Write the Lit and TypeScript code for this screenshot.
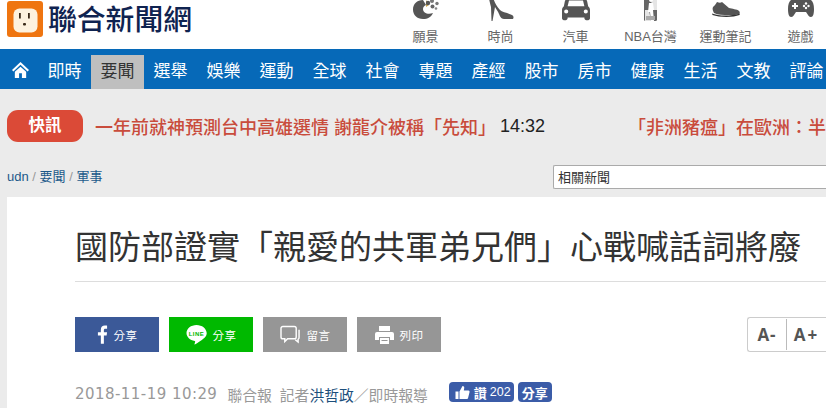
import { LitElement, html, css, svg } from "lit";
import { customElement } from "lit/decorators.js";

const NAV = ["即時", "要聞", "選舉", "娛樂", "運動", "全球", "社會", "專題", "產經", "股市", "房市", "健康", "生活", "文教", "評論"];

const ICONS: [string, any][] = [
  ["願景", svg`<svg width="28" height="24" viewBox="0 0 28 24"><path d="M11 3C5 3 1 7 1 12.500S5 22 11 22c5 0 8-2 10-6-5 2-10 0-10-4 0-2 1-3 3-4L11 3z" fill="#555"/><path d="M14 3l3 5-3 2z" fill="#c9a34a"/><circle cx="16" cy="6" r="2.200" fill="#555"/><circle cx="20" cy="4" r="2" fill="#777"/><circle cx="25" cy="6.500" r="1.700" fill="#777"/><circle cx="20.500" cy="9.500" r="2" fill="#666"/><circle cx="24" cy="11.500" r="1.300" fill="#888"/></svg>`],
  ["時尚", svg`<svg width="28" height="24" viewBox="0 0 28 24"><path d="M2 0h4c1 4 3 9 7 13 2 2 8 3 12 5 2 1 2 4 0 4h-8c-3 0-4-3-5-5-1-3-3-5-4-7L5.500 24H4.500L4 10C3 6 2 3 2 0z" fill="#555"/></svg>`],
  ["汽車", svg`<svg width="28" height="24" viewBox="0 0 30 24"><path d="M7 0h16c2 0 3 1 4 4l1 5c1 1 2 2 2 4v9c0 1-1 2-2 2h-2c-1 0-2-1-2-2v-1H6v1c0 1-1 2-2 2H2c-1 0-2-1-2-2v-9c0-2 1-3 2-4l1-5c1-3 2-4 4-4zM7.500 3 6 9h18l-1.500-6zM4.500 12.500a2.200 2.200 0 100 4.400 2.200 2.200 0 000-4.400zm21 0a2.200 2.200 0 100 4.400 2.200 2.200 0 000-4.400z" fill="#555" fill-rule="evenodd"/></svg>`],
  ["NBA台灣", svg`<svg width="14" height="24" viewBox="0 0 14 24"><rect x="0" width="13" height="24" rx="1.500" fill="#666"/><path d="M7 0h6v13H8zM1 13h4l2 11H1z" fill="#e5e5e5"/><path d="M5 3a2 2 0 114 0 2 2 0 01-4 0zM5 6h4l1 7H9l1 11H7L6 15H4z" fill="#fff"/><path d="M2 19h9v4H2z" fill="#aaa"/></svg>`],
  ["運動筆記", svg`<svg width="30" height="24" viewBox="0 0 30 24"><path d="M2 10c2-2 3-3 4-5 2 1 4 1 5 0l7 6c3 1 8 1 10 3 1 1 1 2 0 3-2 1-6 1-10 1-6 0-11 0-15-2-1-2-2-4-1-6z" fill="#555"/><path d="M1 16.500c6 2.500 18 3 28 0l-.5 1.500c-6 2.500-20 2.500-27 0z" fill="#333"/></svg>`],
  ["遊戲", svg`<svg width="28" height="24" viewBox="0 0 28 24"><path d="M7 2h14c4 0 6 4 6 10 0 5-1 8-3 8s-3-2-5-5H9c-2 3-3 5-5 5s-3-3-3-8C1 6 3 2 7 2z" fill="#555"/><path d="M7 6h2v2h2v2H9v2H7v-2H5V8h2z" fill="#fff"/><circle cx="19" cy="6.500" r="1.200" fill="#fff"/><circle cx="19" cy="11" r="1.200" fill="#fff"/><circle cx="17" cy="9" r="1.200" fill="#fff"/><circle cx="21.500" cy="9" r="1.200" fill="#fff"/></svg>`],
];

@customElement("app-root")
export class AppRoot extends LitElement {
  static styles = css`
    :host { display: block; width: 826px; height: 408px; overflow: hidden; background: #ebebeb; font-family: "Liberation Sans", Arial, "Noto Sans CJK TC", "Noto Sans CJK SC", sans-serif; text-spacing-trim: space-all; position: relative; }
    * { box-sizing: border-box; }
    .top { height: 49px; background: #fff; display: flex; overflow: hidden; padding-left: 7px; }
    .logo { width: 36px; height: 36px; margin-top: 1px; background: #ef7510; border-radius: 3px; display: flex; align-items: center; justify-content: center; flex: none; padding-top: 2px; }
    .brand { margin-left: 5px; font-size: 28.800px; line-height: 40px; font-weight: 500; color: #0f2350; white-space: nowrap; width: 366px; flex: none; }
    .icons { display: flex; flex: none; margin-left: -26px; }
    .ic { width: 75px; height: 49px; display: flex; flex-direction: column; align-items: center; color: #666; font-size: 13px; white-space: nowrap; flex: none; }
    .ic .g { height: 26px; margin-top: -3px; display: flex; align-items: flex-start; justify-content: center; flex: none; }
    .ic .l { line-height: 18px; margin-top: 5px; }
    nav { height: 40px; background: #0669b8; display: flex; padding: 6px 0 0 1px; color: #fff; font-size: 17px; }
    .home { width: 37px; display: flex; justify-content: center; padding: 6px 0 0 1px; flex: none; }
    .nav-i { width: 53px; height: 34px; text-align: center; line-height: 33px; flex: none; }
    .nav-i.on { background: #bfbfbf; color: #333; }
    .ticker { display: flex; height: 32px; margin-top: 21px; margin-left: 7px; align-items: center; white-space: nowrap; font-size: 18px; color: #c94c3c; }
    .badge { width: 76px; height: 32px; background: #db4a37; border-radius: 11px; color: #fff; font-size: 16.500px; font-weight: 700; text-align: center; line-height: 31px; flex: none; margin-right: 12px; }
    .ticker .t { color: #c94c3c; font-weight: 500; }
    .time { color: #222; margin-left: 4px; margin-right: 83px; font-size: 18px; }
    .crumb-row { display: flex; justify-content: space-between; height: 24px; margin-top: 23px; padding-left: 7px; }
    .crumb { font-size: 13px; line-height: 24px; color: #1c5a8a; }
    .crumb i { font-style: normal; color: #999; }
    .search { width: 273px; height: 24px; flex: none; background: #fff; border: 1px solid #aaa; border-right: none; border-radius: 2px 0 0 2px; font-size: 13px; line-height: 24px; padding-left: 4px; color: #333; }
    .card { margin: 8px 0 0 7px; background: #fff; height: 240px; padding: 33px 0 0 68px; }
    h1 { margin: 0; font-size: 33px; line-height: 36px; font-weight: 400; color: #333; white-space: nowrap; height: 52px; width: 751px; border-bottom: 1px solid #ddd; }
    .act { display: flex; margin-top: 35px; gap: 10px; }
    .btn { width: 84px; height: 35px; display: flex; align-items: center; justify-content: center; color: #fff; font-size: 11.500px; gap: 6px; letter-spacing: .5px; }
    .fb { background: #3b5998; }
    .line { background: #00b900; }
    .gray { background: #969696; }
    .size { margin-left: auto; width: 79px; height: 35px; border: 1px solid #ccc; border-right: none; border-radius: 3px 0 0 3px; display: flex; align-items: center; color: #555; font-weight: 700; font-size: 17px; font-family: "Open Sans", "Liberation Sans", sans-serif; }
    .size span { width: 38px; height: 31px; line-height: 31px; text-align: center; white-space: nowrap; letter-spacing: 1px; flex: none; }
    .size span + span { border-left: 1px solid #bbb; width: 40px; letter-spacing: 2px; }
    .meta { display: flex; align-items: center; margin-top: 31px; color: #999; font-size: 14.800px; white-space: nowrap; height: 22px; word-spacing: 3.900px; }
    .meta .date { margin-right: 10px; font-family: "DejaVu Sans", sans-serif; font-size: 15px; letter-spacing: .45px; word-spacing: 0; }
    .meta a { color: #1c4f7c; }
    .pill { height: 20px; background: #3b5ca8; border-radius: 4px; color: #fff; font-size: 13px; display: flex; align-items: center; word-spacing: 0; margin-top: -4px; }
    .pill.a { width: 65px; margin-left: 21px; margin-right: 4px; padding-left: 6px; gap: 4px; }
    .pill.a span { font-size: 12.500px; margin-left: -1px; }
    .pill.b { width: 34px; font-weight: 700; justify-content: center; }
  `;

  render() {
    return html`
      <div class="top">
        <div class="logo">
          <svg width="25" height="25" viewBox="0 0 25 25"><rect x="0.500" y="0.500" width="24" height="24" rx="6" fill="#fdf2df"/><rect x="6" y="5" width="1.800" height="5.500" fill="#3a2a1a"/><rect x="15" y="5" width="1.800" height="5.500" fill="#3a2a1a"/><rect x="10" y="15" width="3" height="2.500" rx="1" fill="#3a2a1a"/></svg>
        </div>
        <div class="brand">聯合新聞網</div>
        <div class="icons">
          ${ICONS.map(([l, g]) => html`<div class="ic"><div class="g">${g}</div><div class="l">${l}</div></div>`)}
        </div>
      </div>
      <nav>
        <div class="home"><svg width="19" height="17" viewBox="0 0 20 18"><path d="M10 1 1 9.500l1.500 1.500L10 4l7.500 7 1.500-1.500zM4 11.500V18h4.500v-5h3v5H16v-6.500L10 6z" fill="#fff"/></svg></div>
        ${NAV.map((n, i) => html`<div class="nav-i ${i === 1 ? "on" : ""}">${n}</div>`)}
      </nav>
      <div class="ticker">
        <div class="badge">快訊</div>
        <span class="t">一年前就神預測台中高雄選情 謝龍介被稱「先知」</span>
        <span class="time">14:32</span>
        <span class="t">「非洲豬瘟」在歐洲：半</span>
      </div>
      <div class="crumb-row">
        <div class="crumb">udn <i>/</i> 要聞 <i>/</i> 軍事</div>
        <div class="search">相關新聞</div>
      </div>
      <div class="card">
        <h1>國防部證實「親愛的共軍弟兄們」心戰喊話詞將廢</h1>
        <div class="act">
          <div class="btn fb"><svg width="11" height="19" viewBox="0 0 12 20"><path d="M7.500 20v-9h3l.5-3.500H7.500V5.300c0-1 .3-1.700 1.800-1.700H11V.5C10.700.4 9.700.3 8.500.3 6 .3 4.200 1.900 4.200 4.800v2.700H1V11h3.200v9z" fill="#fff"/></svg><span>分享</span></div>
          <div class="btn line"><svg width="21" height="20" viewBox="0 0 21 20"><path d="M10.500 0C5 0 .5 3.600.5 8c0 4 3.500 7.300 8.200 7.900.8.200.5 1-.2 3-.1.500.3.700.8.400 2-1.200 8-4.700 10.300-7.800.8-1 1.100-2.200 1.100-3.500C20.500 3.600 16 0 10.500 0z" fill="#fff"/><text x="10.500" y="10.500" font-size="6" font-weight="700" text-anchor="middle" fill="#00b900" font-family="Liberation Sans">LINE</text></svg><span>分享</span></div>
          <div class="btn gray"><svg width="21" height="19" viewBox="0 0 22 20" fill="none" stroke="#fff" stroke-width="1.500"><path d="M3 1.500h12a2 2 0 012 2v9a2 2 0 01-2 2H8l-3 3v-3H3a2 2 0 01-2-2v-9a2 2 0 012-2z"/><path d="M20 5v8a2 2 0 01-1 2v3l-3-2.500"/></svg><span>留言</span></div>
          <div class="btn gray"><svg width="19" height="18" viewBox="0 0 19 18"><path d="M4 0h11v5H4zM2 6h15a2 2 0 012 2v6h-4v-3H4v3H0V8a2 2 0 012-2zM5 12h9v6H5z" fill="#fff"/><path d="M6.500 14h6v1h-6z" fill="#969696"/></svg><span>列印</span></div>
          <div class="size"><span>A-</span><span>A+</span></div>
        </div>
        <div class="meta">
          <span class="date">2018-11-19 10:29</span>
          <span>聯合報 記者<a>洪哲政</a>／即時報導</span>
          <div class="pill a"><svg width="15" height="13" viewBox="0 0 14 13"><path d="M0 5.500h3V13H0zM4 5.500 7 0c1.500 0 2 1 1.700 2.300L8.300 4.500H13c1 0 1.200 1 1 1.700l-1.500 6c-.2.500-.5.800-1 .8H4z" fill="#fff"/></svg><b>讚</b><span>202</span></div>
          <div class="pill b">分享</div>
        </div>
      </div>
    `;
  }
}
